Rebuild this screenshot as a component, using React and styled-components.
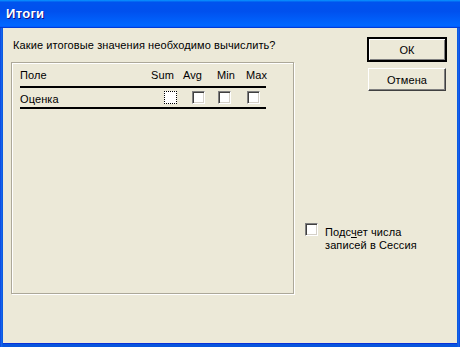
import React from 'react';
import styled, { createGlobalStyle } from 'styled-components';

const GlobalStyle = createGlobalStyle`
  html, body {
    margin: 0;
    padding: 0;
    background: #ece9d8;
  }
  * {
    box-sizing: border-box;
  }
`;

const columns = [
  { label: 'Sum', textOffset: 3, boxOffset: 16, focused: true },
  { label: 'Avg', textOffset: 3, boxOffset: 12 },
  { label: 'Min', textOffset: 5, boxOffset: 6 },
  { label: 'Max', textOffset: 4, boxOffset: 5 },
];

const columnWidths = '128px 32px 32px 30px 24px';

export default function App() {
  return (
    <>
      <GlobalStyle />
      <Window>
        <TitleBar>
          <Title>Итоги</Title>
        </TitleBar>
        <Body>
          <LeftColumn>
            <Prompt>Какие итоговые значения необходимо вычислить?</Prompt>
            <GroupBox>
              <Grid>
                <HeaderCell>Поле</HeaderCell>
                {columns.map((col) => (
                  <HeaderCell key={col.label} $offset={col.textOffset}>
                    {col.label}
                  </HeaderCell>
                ))}
                <FieldCell>Оценка</FieldCell>
                {columns.map((col) => (
                  <BoxCell key={col.label} $offset={col.boxOffset}>
                    <CheckBox $focused={col.focused} />
                  </BoxCell>
                ))}
              </Grid>
            </GroupBox>
          </LeftColumn>
          <RightColumn>
            <DefaultButton>ОК</DefaultButton>
            <Button>Отмена</Button>
            <CountOption>
              <CheckBox />
              <OptionText>
                Подс<u>ч</u>ет числа записей в Сессия
              </OptionText>
            </CountOption>
          </RightColumn>
        </Body>
      </Window>
    </>
  );
}

const Window = styled.div`
  width: 460px;
  height: 347px;
  display: flex;
  flex-direction: column;
  background: linear-gradient(90deg, #0831d9 0, #166aee 1px, #0855dd 3px, #0855dd 457px, #166aee 459px, #0831d9 460px);
  font-family: 'Liberation Sans', Arial, sans-serif;
  font-size: 11px;
  letter-spacing: 0.1px;
  color: #000;
`;

const TitleBar = styled.div`
  height: 28px;
  flex-shrink: 0;
  display: flex;
  align-items: center;
  padding: 0 0 1px 6px;
  background: linear-gradient(
    180deg,
    #0997ff 0,
    #0053ee 8%,
    #0050ee 40%,
    #0066ff 88%,
    #0066ff 93%,
    #005bff 95%,
    #003dd7 96%,
    #003dd7 100%
  );
`;

const Title = styled.span`
  font-family: 'Liberation Sans', Arial, sans-serif;
  font-weight: bold;
  font-size: 13px;
  letter-spacing: 0.3px;
  color: #fff;
  text-shadow: 1px 1px #0f1089;
`;

const Body = styled.div`
  flex: 1;
  display: flex;
  margin: 0 3px 3px;
  padding: 9px 11px 0 8px;
  gap: 11px;
  background: #ece9d8;
  border-bottom: 1px solid #0831d9;
`;

const LeftColumn = styled.div`
  display: flex;
  flex-direction: column;
`;

const Prompt = styled.div`
  margin: 1px 0 0 2px;
  height: 14px;
  line-height: 14px;
`;

const GroupBox = styled.div`
  margin-top: 10px;
  width: 283px;
  height: 232px;
  border: 1px solid #aca899;
  box-shadow: 1px 1px 0 #fff, inset 1px 1px 0 #fff;
  padding: 5px 0 0 8px;
`;

const Grid = styled.div`
  display: grid;
  grid-template-columns: ${columnWidths};
  width: 246px;
`;

const HeaderCell = styled.div`
  height: 20px;
  padding: 0 0 4px ${(p) => p.$offset || 0}px;
  line-height: 14px;
  display: flex;
  align-items: flex-end;
  border-bottom: 2px solid #000;
`;

const FieldCell = styled.div`
  height: 21px;
  display: flex;
  align-items: center;
  padding-top: 2px;
  border-bottom: 2px solid #000;
`;

const BoxCell = styled.div`
  height: 21px;
  display: flex;
  align-items: center;
  padding: 0 0 1px ${(p) => p.$offset}px;
  border-bottom: 2px solid #000;
`;

const CheckBox = styled.span`
  display: block;
  flex-shrink: 0;
  width: 13px;
  height: 13px;
  background: #fff;
  ${(p) =>
    p.$focused
      ? `
    border: 1px dotted #000;
  `
      : `
    border-style: solid;
    border-width: 1px;
    border-color: #808080 #fff #fff #808080;
    box-shadow: inset 1px 1px 0 #404040, inset -1px -1px 0 #d4d0c8;
  `}
`;

const RightColumn = styled.div`
  flex: 1;
  display: flex;
  flex-direction: column;
  align-items: flex-end;
`;

const Button = styled.button`
  width: 78px;
  height: 23px;
  margin-top: 6px;
  padding: 0;
  font-family: 'Liberation Sans', Arial, sans-serif;
  font-size: 11px;
  letter-spacing: 0.1px;
  color: #000;
  background: #ece9d8;
  border-style: solid;
  border-width: 1px;
  border-color: #fff #404040 #404040 #fff;
  box-shadow: inset -1px -1px 0 #808080;
`;

const DefaultButton = styled(Button)`
  width: 80px;
  height: 25px;
  margin: 0 -1px 0 0;
  border-width: 2px;
  border-color: #000;
  box-shadow: inset 1px 1px 0 #fff, inset -1px -1px 0 #808080;
`;

const CountOption = styled.div`
  align-self: stretch;
  display: flex;
  align-items: flex-start;
  gap: 7px;
  margin-top: 132px;
`;

const OptionText = styled.div`
  margin-top: 3px;
  max-width: 110px;
  line-height: 13px;

  u {
    text-underline-offset: 1px;
  }
`;
